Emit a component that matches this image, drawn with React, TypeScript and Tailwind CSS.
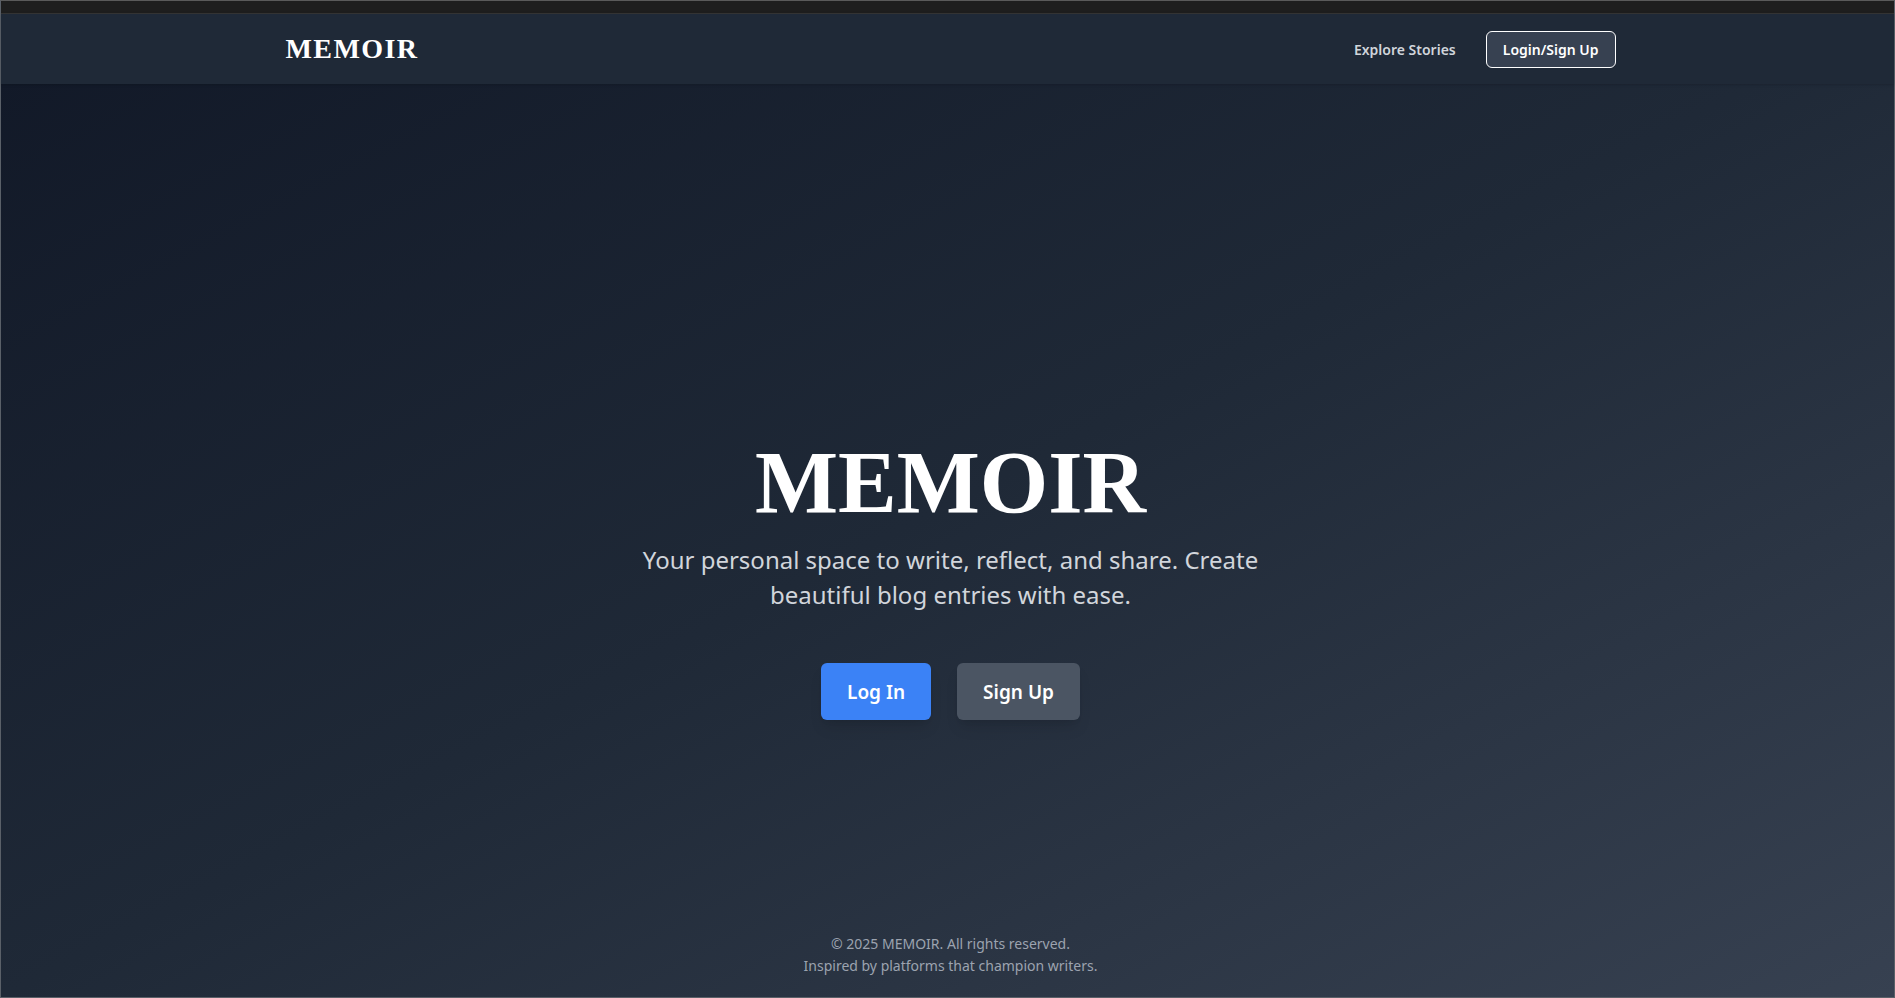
export default function App() {
  return (
    <div className="flex min-h-screen flex-col border border-[#5a6068] border-t-[#5a5a5a] bg-[#1f2937] font-['Noto_Sans','Open_Sans',sans-serif] text-white">
      <div className="h-3 bg-[#1e1e1e]" />
      <div className="flex grow flex-col bg-linear-to-br/srgb from-[#111827] via-[#1f2937] to-[#374151]">
        <header className="border-t border-[#333333] bg-[#1f2937] pl-1.5 shadow-sm">
          <div className="mx-auto flex h-[70px] max-w-[1330px] items-center justify-between">
            <a href="#" className="font-['Liberation_Serif',serif] text-[28px] leading-8 font-bold tracking-wider">
              MEMOIR
            </a>
            <nav className="flex items-center gap-[30px] text-[14px] leading-[21px] font-semibold">
              <a href="#stories" className="text-[#d1d5db]">
                Explore Stories
              </a>
              <a href="#login" className="rounded-md border border-white bg-[#374151] px-4 py-[7px]">
                Login/Sign Up
              </a>
            </nav>
          </div>
        </header>
        <main className="flex grow flex-col items-center justify-center pt-[142px] pl-1.5 text-center">
          <h1 className="font-['Liberation_Serif',serif] text-[88px] leading-[88px] font-bold">MEMOIR</h1>
          <p className="mt-[15px] max-w-[660px] text-[24px] leading-[35px] text-[#d1d5db]">
            Your personal space to write, reflect, and share. Create beautiful blog entries with ease.
          </p>
          <div className="mt-[51px] flex gap-[26px] text-[19px] leading-[29px] font-semibold">
            <button type="button" className="rounded-md bg-[#3b82f6] px-[26px] pt-[15px] pb-[13px] shadow-lg">
              Log In
            </button>
            <button type="button" className="rounded-md bg-[#4b5563] px-[26px] pt-[15px] pb-[13px] shadow-lg">
              Sign Up
            </button>
          </div>
        </main>
        <footer className="pb-5 pl-1.5 text-center text-[14px] leading-[22px] text-[#9ca3af]">
          <p>© 2025 MEMOIR. All rights reserved.</p>
          <p>Inspired by platforms that champion writers.</p>
        </footer>
      </div>
    </div>
  );
}
